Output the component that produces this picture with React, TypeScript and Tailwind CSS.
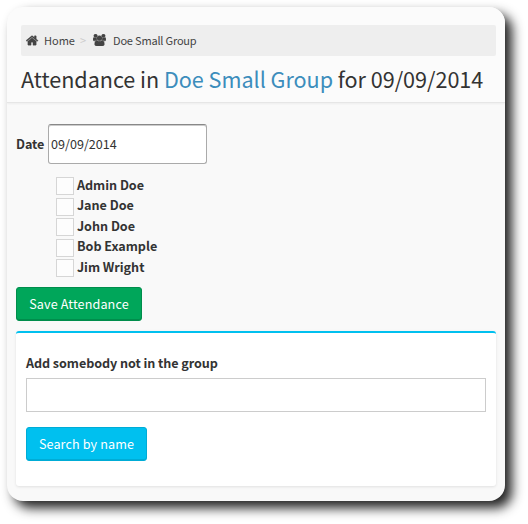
import React from "react";

const people = [
  { name: "Admin Doe", width: "w-[67px]", gap: "mb-[3px]", text: "-top-px" },
  { name: "Jane Doe", width: "w-[56px]", gap: "mb-[2px]", text: "-top-[2px]" },
  { name: "John Doe", width: "w-[58px]", gap: "mb-[3px]", text: "-top-px" },
  { name: "Bob Example", width: "w-[80px]", gap: "mb-[2px]", text: "-top-[2px]" },
  { name: "Jim Wright", width: "w-[66px]", gap: "", text: "-top-px" },
];

function HomeIcon() {
  return (
    <svg className="h-[13px] w-[13px] shrink-0" viewBox="0 0 1792 1792" fill="currentColor" stroke="currentColor" strokeWidth="50">
      <path d="M1408 992v480q0 26-19 45t-45 19h-384v-384h-256v384h-384q-26 0-45-19t-19-45v-480q0-1 .5-3t.5-3l575-474 575 474q1 2 1 6zm223-69l-62 74q-8 9-21 11h-3q-13 0-21-7l-692-577-692 577q-12 8-24 7-13-2-21-11l-62-74q-8-10-7-23.5t11-21.5l719-599q32-26 76-26t76 26l244 204v-195q0-14 9-23t23-9h192q14 0 23 9t9 23v408l219 182q10 8 11 21.5t-7 23.5z" />
    </svg>
  );
}

function GroupIcon() {
  return (
    <svg className="h-[12px] w-[13px] shrink-0" viewBox="-64 0 1920 1792" preserveAspectRatio="none" fill="currentColor" stroke="currentColor" strokeWidth="70">
      <path d="M529 896q-162 5-265 128h-134q-82 0-138-40.5t-56-118.5q0-353 124-353 6 0 43.5 21t97.5 42.5 119 21.5q67 0 133-23-5 37-5 66 0 139 81 256zm1071 637q0 120-73 189.5t-194 69.5h-874q-121 0-194-69.5t-73-189.5q0-53 3.5-103.5t14-109 26.5-108.5 43-97.5 62-81 85.5-53.5 111.5-20q10 0 43 21.5t73 48 107 48 135 21.5 135-21.5 107-48 73-48 43-21.5q61 0 111.5 20t85.5 53.5 62 81 43 97.5 26.5 108.5 14 109 3.5 103.5zm-1024-1277q0 106-75 181t-181 75-181-75-75-181 75-181 181-75 181 75 75 181zm704 384q0 159-112.5 271.5t-271.5 112.5-271.5-112.5-112.5-271.5 112.5-271.5 271.5-112.5 271.5 112.5 112.5 271.5zm576 225q0 78-56 118.5t-138 40.5h-134q-103-123-265-128 81-117 81-256 0-29-5-66 66 23 133 23 59 0 119-21.5t97.5-42.5 43.5-21q124 0 124 353zm-128-609q0 106-75 181t-181 75-181-75-75-181 75-181 181-75 181 75 75 181z" />
    </svg>
  );
}

export default function App() {
  return (
    <div className="h-[524px] w-[528px] overflow-hidden bg-white pl-[7px] pt-[7px] font-['Noto_Sans_CJK_SC',sans-serif] text-[13px] leading-[20px] text-[#333]">
      <div className="h-[494px] w-[498px] overflow-hidden rounded-[16px] bg-[#f9f9f9] shadow-[7px_7px_12px_0px_#222]">
        <header className="h-[96px] border-b border-[#e6e6e6] bg-[#fbfbfb] pl-[14px] pr-[9px] pt-[18px] shadow-[0_1px_2px_rgba(0,0,0,0.05)]">
          <nav className="flex h-[31px] items-center rounded-[2px] bg-[#eee] pb-px pl-[5px] text-[11px] text-[#444]">
            <HomeIcon />
            <span className="ml-[5px] w-[32px] whitespace-nowrap">Home</span>
            <span className="ml-[4px] w-[8px] text-[11px] text-[#ccc]">&gt;</span>
            <span className="ml-[5px] flex"><GroupIcon /></span>
            <span className="ml-[7px] whitespace-nowrap tracking-[-0.19px]">Doe Small Group</span>
          </nav>
          <h1 className="mt-[7px] whitespace-nowrap text-[21.6px] leading-[32px] tracking-[-0.03px]">
            Attendance in <a className="text-[#3c8dbc]">Doe Small Group</a> for 09/09/2014
          </h1>
        </header>
        <main className="px-[9px] pt-[21px]">
          <label className="flex items-center">
            <span className="w-[32px] whitespace-nowrap text-[12.6px] font-bold tracking-[-0.1px]">Date</span>
            <input
              className="h-[40px] w-[159px] rounded-[3px] border border-[#aaa] border-t-[#888] bg-white px-[2px] pb-px text-[12.6px] shadow-[inset_0_1px_0_#ccc]"
              defaultValue="09/09/2014"
            />
          </label>
          <ul className="ml-[40px] mt-[13px]">
            {people.map((person) => (
              <li key={person.name} className={`flex h-[18px] items-center ${person.gap}`}>
                <span className="h-[18px] w-[18px] shrink-0 border border-[#d6d6d6] bg-[#fdfdfd]" />
                <span className={`relative ml-[3px] whitespace-nowrap text-[12.6px] font-bold tracking-[-0.03px] ${person.width} ${person.text}`}>{person.name}</span>
              </li>
            ))}
          </ul>
          <button className="mt-[10px] block h-[34px] w-[126px] whitespace-nowrap rounded-[3px] border border-[#008d4c] bg-[#00a65a] text-[12.6px] tracking-[0.12px] text-white shadow-[inset_0_-1px_0_#008d4c]">
            Save Attendance
          </button>
          <section className="mt-[10px] h-[155px] rounded-[3px] border-t-2 border-[#00c0ef] bg-white px-[10px] pt-[20px] shadow-[0_1px_3px_rgba(0,0,0,0.1)]">
            <div className="h-[25px] whitespace-nowrap text-[12.6px] font-bold tracking-[-0.07px]">Add somebody not in the group</div>
            <input className="block h-[34px] w-full border border-[#ccc] bg-white" />
            <button className="mt-[15px] block h-[34px] w-[121px] whitespace-nowrap rounded-[3px] border border-[#00acd6] bg-[#00c0ef] text-[12.6px] tracking-[0.12px] text-white shadow-[inset_0_-1px_0_#00acd6]">
              Search by name
            </button>
          </section>
        </main>
      </div>
    </div>
  );
}
